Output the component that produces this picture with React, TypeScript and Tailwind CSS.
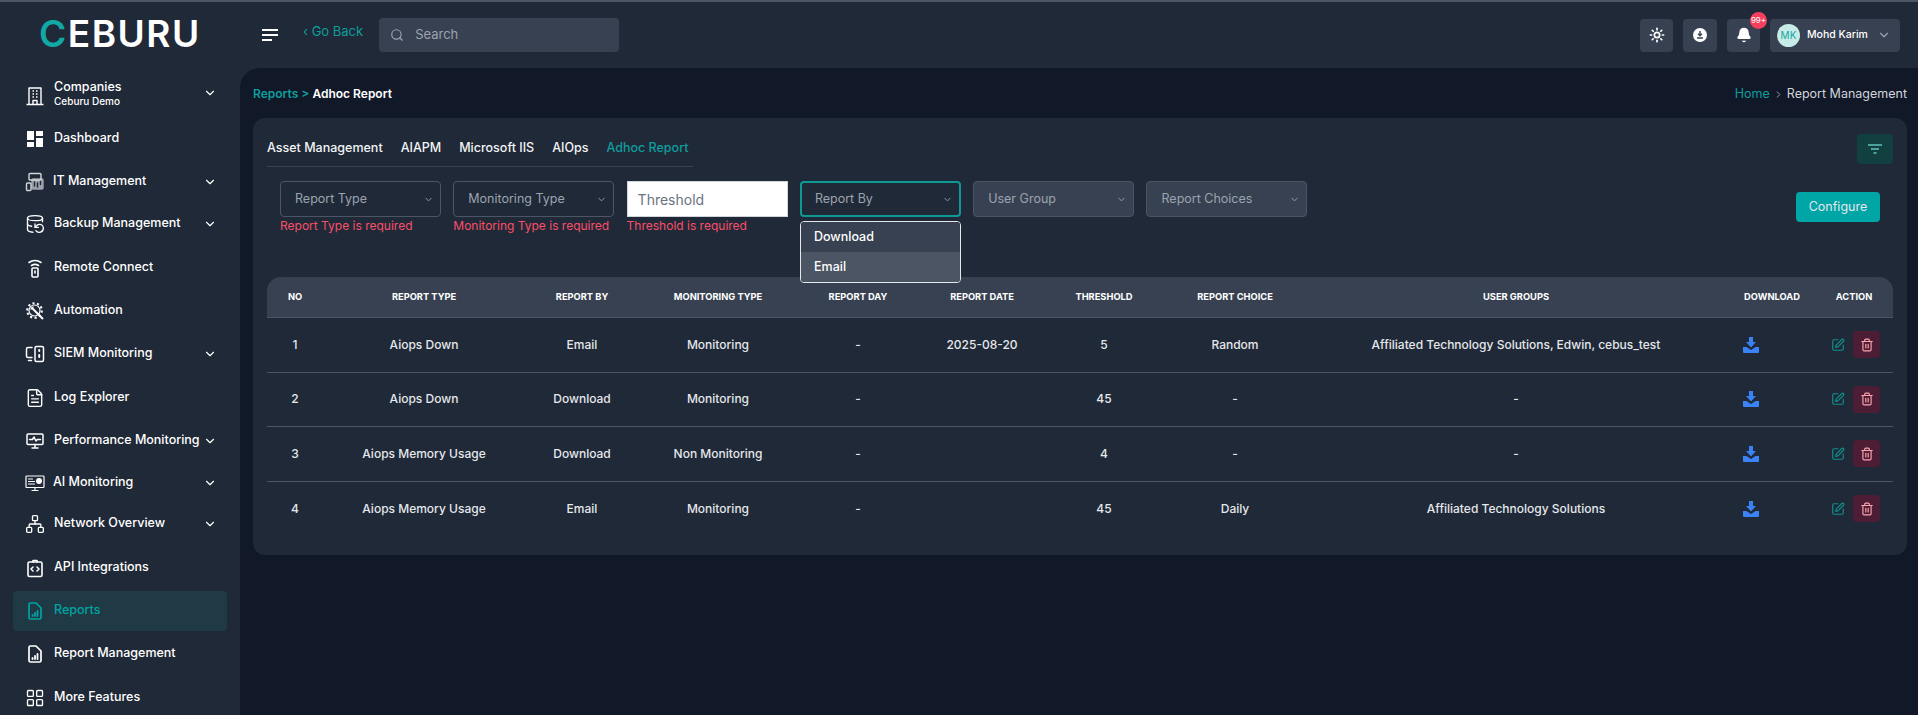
import { ChevronDown, ChevronRight, DatabaseBackup, FileText, LayoutGrid, Network, Search, SquarePen, Trash2, Sun, Bell } from 'lucide-react'
import type { ReactNode } from 'react'

const font = { stroke: 'currentColor', fill: 'none', strokeWidth: 1.8, strokeLinecap: 'round', strokeLinejoin: 'round' } as const

const BuildingIcon = () => (
  <svg width="20" height="20" viewBox="0 0 20 20" {...font} strokeWidth={1.4} strokeLinecap="butt">
    <path d="M1.500 18.500h17M4 18.500V2h12v16.500M8 18.500v-4h4v4" />
    <path d="M7.500 5h1.500M11 5h1.500M7.500 8h1.500M11 8h1.500M7.500 11h1.500M11 11h1.500" strokeWidth="1.600" />
  </svg>
)

const DashboardIcon = () => (
  <svg width="20" height="20" viewBox="0 0 20 20" fill="currentColor">
    <rect x="2" y="2" width="7" height="9" />
    <rect x="2" y="13" width="7" height="5" />
    <rect x="11" y="2" width="7" height="5" />
    <rect x="11" y="9" width="7" height="9" />
  </svg>
)

const ItIcon = () => (
  <svg width="20" height="20" viewBox="0 0 20 20" {...font} strokeWidth={1.4} className="text-[#d1d5db]">
    <rect x="4" y="1.500" width="12" height="6.500" rx="1" />
    <rect x="1.500" y="11" width="4.500" height="7.500" rx="1" />
    <rect x="7" y="7" width="11" height="10" rx="1" fill="currentColor" opacity="0.7" />
    <path d="M9.500 10v4M12.500 11v4M15.500 9.500v3" stroke="#1f2937" />
  </svg>
)

const RemoteIcon = () => (
  <svg width="20" height="20" viewBox="0 0 20 20" {...font} strokeWidth={1.6}>
    <path d="M4 4.500c3.500-2.600 8.500-2.600 12 0M6.500 7.500c2.200-1.400 4.800-1.400 7 0" />
    <rect x="7" y="10" width="6" height="9" rx="1" />
    <path d="M10 13v2" />
  </svg>
)

const GearWrenchIcon = () => (
  <svg width="20" height="20" viewBox="0 0 20 20" {...font} strokeLinecap="butt">
    <circle cx="9.500" cy="9.500" r="7.300" strokeDasharray="2.200 2.380" strokeWidth="2" />
    <circle cx="9.500" cy="9.500" r="5.500" strokeWidth="1.200" />
    <path d="M7 7l11 11" strokeWidth="2" />
    <path d="M6 8.500a3 3 0 0 1 2.500-2.500" strokeWidth="1.500" />
  </svg>
)

const SiemIcon = () => (
  <svg width="20" height="20" viewBox="0 0 20 20" {...font} strokeWidth={1.5}>
    <path d="M7 3.500H3a1.500 1.500 0 0 0-1.500 1.500v7A1.500 1.500 0 0 0 3 13.500h4M3.500 16.500h3" />
    <rect x="10" y="2.500" width="8.500" height="15" rx="1.500" />
    <path d="M14.200 6v1M14.200 11v2" strokeWidth="2" />
  </svg>
)

const PerfIcon = () => (
  <svg width="20" height="20" viewBox="0 0 20 20" {...font} strokeWidth={1.5}>
    <rect x="2" y="3" width="16" height="10.500" rx="1" />
    <path d="M4.500 8.500h3l1.500-2.500 2 4 1.200-1.500h3.300M7 17h6M10 13.500V17" />
  </svg>
)

const AiIcon = () => (
  <svg width="20" height="20" viewBox="0 0 20 20" {...font} strokeWidth={1.200}>
    <rect x="1" y="3" width="18" height="11.500" rx="0.800" />
    <path d="M3.500 6h4M3.500 8.500h6M3.500 11h6M7 17.500h6M10 14.500v3" />
    <circle cx="14" cy="8" r="2.400" fill="currentColor" />
  </svg>
)

const ApiIcon = () => (
  <svg width="20" height="20" viewBox="0 0 20 20" {...font} strokeWidth={1.600}>
    <rect x="3" y="4" width="14" height="14.500" rx="1.500" />
    <path d="M8 4V2.500h4V4M8 9l-2 2 2 2M12 9l2 2-2 2" />
  </svg>
)

const ReportFileIcon = () => (
  <svg width="20" height="20" viewBox="0 0 20 20" {...font} strokeWidth={1.700}>
    <path d="M4 3.500A1.500 1.500 0 0 1 5.500 2H11l5 5v9.500a1.500 1.500 0 0 1-1.500 1.500h-9A1.500 1.500 0 0 1 4 16.500z" />
    <path d="M7.500 15v-1M10 15v-3M12.500 15v-5" strokeWidth="1.800" />
  </svg>
)

const TrayDownload = () => (
  <svg width="16" height="16" viewBox="0 0 16 16" fill="currentColor">
    <path d="M6 0h4v5h3L8 10.500 3 5h3z" />
    <path d="M0 10h3.500L8 13l4.500-3H16v5a1 1 0 0 1-1 1H1a1 1 0 0 1-1-1z" />
  </svg>
)

const CircleDownload = () => (
  <svg width="14" height="14" viewBox="0 0 14 14">
    <circle cx="7" cy="7" r="7" fill="currentColor" />
    <path d="M7 3v4.500M5 5.800l2 2 2-2M4 10h6" stroke="#374151" strokeWidth="1.400" fill="none" />
  </svg>
)

type NavItem = { label: string; icon: ReactNode; mt: string; caret?: boolean; active?: boolean; tight?: boolean }

const navItems: NavItem[] = [
  { label: 'Dashboard', icon: <DashboardIcon />, mt: 'mt-0' },
  { label: 'IT Management', icon: <ItIcon />, mt: 'mt-0', caret: true, tight: true },
  { label: 'Backup Management', icon: <DatabaseBackup size={20} strokeWidth={1.6} />, mt: '-mt-px', caret: true },
  { label: 'Remote Connect', icon: <RemoteIcon />, mt: 'mt-px' },
  { label: 'Automation', icon: <GearWrenchIcon />, mt: 'mt-0' },
  { label: 'SIEM Monitoring', icon: <SiemIcon />, mt: 'mt-0', caret: true },
  { label: 'Log Explorer', icon: <FileText size={20} strokeWidth={1.7} />, mt: 'mt-px' },
  { label: 'Performance Monitoring', icon: <PerfIcon />, mt: 'mt-0', caret: true },
  { label: 'AI Monitoring', icon: <AiIcon />, mt: '-mt-px', caret: true, tight: true },
  { label: 'Network Overview', icon: <Network size={20} strokeWidth={1.6} />, mt: '-mt-0.5', caret: true },
  { label: 'API Integrations', icon: <ApiIcon />, mt: 'mt-px' },
  { label: 'Reports', icon: <ReportFileIcon />, mt: 'mt-0', active: true },
  { label: 'Report Management', icon: <ReportFileIcon />, mt: 'mt-0' },
  { label: 'More Features', icon: <LayoutGrid size={20} strokeWidth={1.6} />, mt: 'mt-px' },
]

const rows = [
  { no: 1, type: 'Aiops Down', by: 'Email', mon: 'Monitoring', day: '-', date: '2025-08-20', th: '5', choice: 'Random', groups: 'Affiliated Technology Solutions, Edwin, cebus_test' },
  { no: 2, type: 'Aiops Down', by: 'Download', mon: 'Monitoring', day: '-', date: '', th: '45', choice: '-', groups: '-' },
  { no: 3, type: 'Aiops Memory Usage', by: 'Download', mon: 'Non Monitoring', day: '-', date: '', th: '4', choice: '-', groups: '-' },
  { no: 4, type: 'Aiops Memory Usage', by: 'Email', mon: 'Monitoring', day: '-', date: '', th: '45', choice: 'Daily', groups: 'Affiliated Technology Solutions' },
]

const gridCols = 'grid grid-cols-[56px_202px_114px_158px_122px_126px_118px_144px_408px_114px_64px] items-center text-center'

function Sidebar() {
  return (
    <aside className="w-[240px] shrink-0 px-[13px]">
      <div className="flex h-[42px] items-center pl-[12px] pr-[10px] text-white">
        <span className="shrink-0"><BuildingIcon /></span>
        <div className="mb-[6px] ml-[9px] flex-1 leading-none">
          <div className="text-[12.500px] leading-[15px] font-medium">Companies</div>
          <div className="text-[10px] leading-[14px] font-medium">Ceburu Demo</div>
        </div>
        <ChevronDown size={14} className="mb-[6px]" />
      </div>
      {navItems.map((item) => (
        <div key={item.label} className={`flex h-[43px] items-center ${item.mt}`}>
          <div
            className={`flex h-[40px] w-full items-center rounded-[4px] pl-[12px] pr-[10px] ${
              item.active ? 'bg-[#1f3a44] text-[#00a3a3]' : 'text-white'
            }`}
          >
            <span className="flex w-[20px] shrink-0 justify-center">{item.icon}</span>
            <span className={`flex-1 whitespace-nowrap text-[12.500px] font-medium ${item.tight ? 'ml-[8px]' : 'ml-[9px]'}`}>{item.label}</span>
            {item.caret && <ChevronDown size={14} className="shrink-0" />}
          </div>
        </div>
      ))}
    </aside>
  )
}

function Header() {
  return (
    <header className="flex h-[66px] items-center">
      <div className="-mt-[4px] w-[262px] shrink-0 pl-[39px]">
        <div className="text-[37px] font-semibold leading-none tracking-[1.500px] text-white">
          <span className="text-[#12a8a6]">C</span>EBURU
        </div>
      </div>
      <div className="flex w-[16px] flex-col gap-[3px]">
        <span className="h-[2px] w-[16px] bg-white" />
        <span className="h-[2px] w-[16px] bg-white" />
        <span className="h-[2px] w-[10px] bg-white" />
      </div>
      <a className="ml-[25px] -mt-[7px] whitespace-nowrap text-[13px] text-[#0f9d9d]">‹ Go Back</a>
      <div className="ml-[16px] flex h-[34px] w-[240px] items-center rounded-[4px] bg-[#374151] px-[11px] text-[#9ca3af]">
        <Search size={14} />
        <span className="ml-[11px] text-[13px]">Search</span>
      </div>
      <div className="ml-auto mr-[18px] flex items-center">
        <button className="flex h-[33px] w-[33px] items-center justify-center rounded-[4px] bg-[#374151] text-white">
          <Sun size={16} strokeWidth={2.500} />
        </button>
        <button className="ml-[10px] flex h-[33px] w-[34px] items-center justify-center rounded-[4px] bg-[#374151] text-white">
          <CircleDownload />
        </button>
        <button className="relative ml-[10px] flex h-[33px] w-[33px] items-center justify-center rounded-[4px] bg-[#374151] text-white">
          <Bell size={16} fill="currentColor" />
          <span className="absolute -right-[7px] -top-[7px] flex h-[17px] w-[17px] items-center justify-center rounded-full bg-[#f43f5e] text-[8px] text-white">99+</span>
        </button>
        <div className="ml-[10px] flex h-[33px] w-[130px] items-center rounded-[4px] bg-[#374151] pl-[7px] pr-[9px]">
          <span className="flex h-[23px] w-[23px] items-center justify-center rounded-full bg-[#c7ebe6] text-[10px] text-[#14a8a4]">MK</span>
          <span className="ml-[7px] flex-1 whitespace-nowrap text-[10.500px] font-medium text-white">Mohd Karim</span>
          <ChevronDown size={14} className="text-[#9ca3af]" />
        </div>
      </div>
    </header>
  )
}

function Select({ label, error, filled, focused }: { label: string; error?: string; filled?: boolean; focused?: boolean }) {
  return (
    <div className="w-[161px]">
      <div
        className={`flex h-[36px] items-center justify-between rounded-[4px] pr-[6px] text-[#9ca3af] ${
          focused ? 'border-2 border-[#0d9a94] pl-[13px]' : filled ? 'border border-[#4b5563] bg-[#374151] pl-[14px]' : 'border border-[#4b5563] pl-[14px]'
        }`}
      >
        <span className="text-[12.500px]">{label}</span>
        <ChevronDown size={11} />
      </div>
      {error && <p className="mt-[1px] whitespace-nowrap text-[12px] leading-[16px] text-[#fb4f69]">{error}</p>}
    </div>
  )
}

function ReportTable() {
  const heads = ['NO', 'REPORT TYPE', 'REPORT BY', 'MONITORING TYPE', 'REPORT DAY', 'REPORT DATE', 'THRESHOLD', 'REPORT CHOICE', 'USER GROUPS', 'DOWNLOAD', 'ACTION']
  return (
    <div className="mt-[35px]">
      <div className={`${gridCols} h-[41px] rounded-t-[14px] border-b border-[#4b5563] bg-[#374151]`}>
        {heads.map((h, i) => (
          <div key={h} className={`whitespace-nowrap text-[9.300px] font-bold text-white ${i === 8 ? 'pl-[10px]' : ''} ${i === 10 ? 'pr-[14px]' : ''}`}>{h}</div>
        ))}
      </div>
      {rows.map((r, i) => (
        <div key={r.no} className={`${gridCols} h-[54.500px] text-[12px] font-medium text-[#e5e7eb] ${i < 3 ? 'border-b border-[#4b5563]' : ''}`}>
          <div>{r.no}</div>
          <div className="whitespace-nowrap">{r.type}</div>
          <div>{r.by}</div>
          <div className="whitespace-nowrap">{r.mon}</div>
          <div>{r.day}</div>
          <div>{r.date}</div>
          <div>{r.th}</div>
          <div>{r.choice}</div>
          <div className="whitespace-nowrap pl-[10px]">{r.groups}</div>
          <div className="flex justify-start pl-[28px] text-[#3b82f6]"><TrayDownload /></div>
          <div className="flex items-center justify-end pr-[13px]">
            <SquarePen size={14} className="text-[#0f8f8c]" />
            <button className="ml-[8px] flex h-[27px] w-[27px] shrink-0 items-center justify-center rounded-[4px] bg-[#4c1d35] text-[#fda4af]">
              <Trash2 size={14} />
            </button>
          </div>
        </div>
      ))}
    </div>
  )
}

export default function App() {
  return (
    <div className="h-[715px] overflow-hidden border-t-2 border-[#4b5563] bg-[#1f2937] font-['Inter','Noto_Sans',sans-serif]">
      <Header />
      <div className="flex">
        <div className="pt-[7px]"><Sidebar /></div>
        <main className="h-[647px] flex-1 rounded-tl-[20px] bg-[#111827] px-[13px] pt-[17px]">
          <div className="flex h-[18px] items-center justify-between">
            <div className="text-[12px] font-semibold text-white">
              <span className="text-[#0f9d9d]">Reports &gt; </span>Adhoc Report
            </div>
            <div className="flex items-center text-[12.500px] text-[#d1d5db]">
              <span className="text-[#0f9d9d]">Home</span>
              <ChevronRight size={11} className="mx-[3px] text-[#9ca3af]" />
              Report Management
            </div>
          </div>
          <section className="mt-[15px] h-[437px] rounded-[12px] bg-[#1f2937] px-[14px]">
            <div className="flex items-start justify-between pt-[16px]">
              <nav className="flex h-[33px] w-[426px] items-center gap-[18px] whitespace-nowrap border-b border-[#374151] pb-[3px] text-[12.500px] font-medium text-[#f3f4f6]">
                <span>Asset Management</span>
                <span>AIAPM</span>
                <span>Microsoft IIS</span>
                <span>AIOps</span>
                <span className="text-[#0f9d9d]">Adhoc Report</span>
              </nav>
              <button className="flex h-[30px] w-[36px] items-center justify-center rounded-[4px] bg-[#123f40] text-[#62c4c0]">
                <svg width="14" height="10" viewBox="0 0 14 10" fill="none" stroke="currentColor" strokeWidth="1.500"><path d="M0 1h14M3 5h8M5.500 9h3" /></svg>
              </button>
            </div>
            <div className="relative mt-[14px] flex h-[61px] items-start gap-[12.300px] pl-[13px]">
              <Select label="Report Type" error="Report Type is required" />
              <Select label="Monitoring Type" error="Monitoring Type is required" />
              <div className="w-[161px]">
                <div className="flex h-[36px] items-center border border-[#d1d5db] bg-white px-[10px] text-[14px] text-[#6b7280]">Threshold</div>
                <p className="mt-[1px] whitespace-nowrap text-[12px] leading-[16px] text-[#fb4f69]">Threshold is required</p>
              </div>
              <Select label="Report By" focused />
              <Select label="User Group" filled />
              <Select label="Report Choices" filled />
              <button className="absolute right-[13px] top-[11px] flex h-[30px] w-[84px] items-center justify-center rounded-[4px] bg-[#00a5a5] text-[12.500px] text-[#e5e7eb]">Configure</button>
              <div className="absolute left-[533px] top-[40px] z-10 w-[161px] overflow-hidden rounded-[4px] border border-[#e5e7eb] text-[12.500px] font-medium text-white">
                <div className="flex h-[30px] items-center bg-[#374151] px-[13px]">Download</div>
                <div className="flex h-[30px] items-center bg-[#4b5563] px-[13px]">Email</div>
              </div>
            </div>
            <ReportTable />
          </section>
        </main>
      </div>
    </div>
  )
}
